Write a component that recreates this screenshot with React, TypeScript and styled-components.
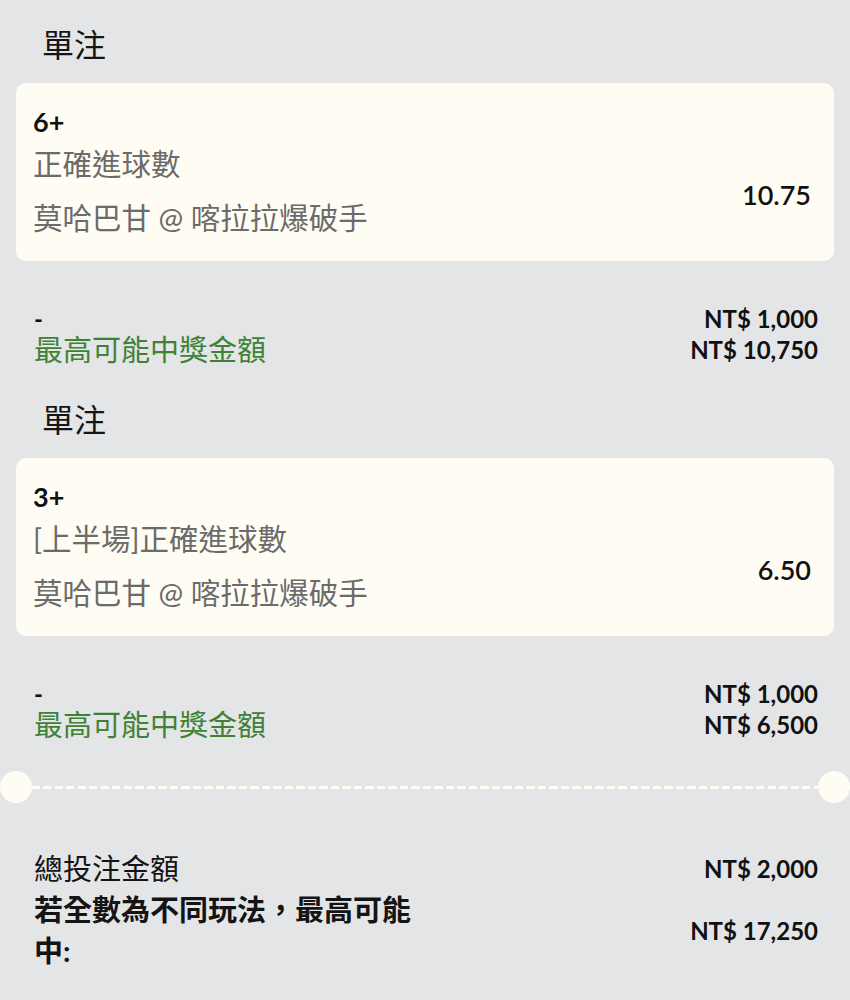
import React from "react";
import styled, { createGlobalStyle } from "styled-components";

const GlobalStyle = createGlobalStyle`
  html, body {
    margin: 0;
    padding: 0;
    background: #e4e5e7;
  }
  body {
    font-family: "Lato", "Noto Sans CJK TC", sans-serif;
    color: #111;
  }
`;

const Page = styled.div`
  width: 850px;
  background: #e4e5e7;
  padding-top: 23px;
  padding-bottom: 30px;
`;

const Section = styled.section`
  padding: 0 16px;
  margin-bottom: 33.5px;
`;

const Title = styled.h2`
  margin: 0 0 16px;
  padding-left: 26px;
  font-size: 32px;
  line-height: 44px;
  font-weight: 400;
  color: #151515;
`;

const Card = styled.div`
  background: #fffdf3;
  border-radius: 10px;
  padding: 21px 23px 19px 17px;
  display: grid;
  grid-template-columns: 1fr auto;
  grid-template-rows: 36px 48px 54px;
`;

const Selection = styled.div`
  grid-column: 1 / 2;
  grid-row: 1;
  font-size: 27px;
  line-height: 36px;
  font-weight: 700;
  color: #111;
`;

const Market = styled.div<{ $row: number; $gap?: number }>`
  grid-column: 1 / 2;
  grid-row: ${(p) => p.$row};
  margin-top: ${(p) => p.$gap ?? 0}px;
  font-size: 29.5px;
  line-height: 48px;
  color: #6b6b6b;
`;

const Odds = styled.div`
  grid-column: 2;
  grid-row: 2 / 4;
  align-self: center;
  padding-top: 6px;
  font-size: 27px;
  font-weight: 600;
  color: #111;
`;

const Summary = styled.div`
  margin-top: 41.5px;
  padding: 0 16px 0 18px;
  display: grid;
  grid-template-columns: 1fr auto;
  grid-auto-rows: 31px;
  align-items: center;
`;

const Dash = styled.div`
  font-size: 24px;
  font-weight: 700;
  line-height: 31px;
  color: #111;
`;

const GreenLabel = styled.div`
  font-size: 29px;
  line-height: 31px;
  color: #3f8236;
`;

const Amount = styled.div`
  text-align: right;
  font-size: 24px;
  font-weight: 700;
  line-height: 31px;
  color: #111;
  white-space: nowrap;
`;

const Separator = styled.div`
  display: flex;
  align-items: center;
  height: 32px;
  margin-top: -2px;
`;

const Hole = styled.span`
  flex: none;
  width: 32px;
  height: 32px;
  border-radius: 50%;
  background: #fffdf3;
`;

const DashedLine = styled.span`
  flex: 1;
  height: 3px;
  background: repeating-linear-gradient(
    to right,
    #fffdf3 0,
    #fffdf3 8px,
    transparent 8px,
    transparent 11.5px
  );
`;

const Totals = styled.div`
  margin-top: 50px;
  padding: 0 32px 0 34px;
  display: grid;
  grid-template-columns: 1fr auto;
  row-gap: 5px;
  align-items: center;
`;

const TotalLabel = styled.div<{ $bold?: boolean }>`
  font-size: 29px;
  line-height: ${(p) => (p.$bold ? "41px" : "30px")};
  font-weight: ${(p) => (p.$bold ? 700 : 400)};
  color: #141414;
  max-width: 392px;
`;

const bets = [
  {
    selection: "6+",
    market: "正確進球數",
    teams: "莫哈巴甘 @ 喀拉拉爆破手",
    odds: "10.75",
    stake: "NT$ 1,000",
    win: "NT$ 10,750",
  },
  {
    selection: "3+",
    market: "[上半場]正確進球數",
    teams: "莫哈巴甘 @ 喀拉拉爆破手",
    odds: "6.50",
    stake: "NT$ 1,000",
    win: "NT$ 6,500",
  },
];

export default function App() {
  return (
    <>
      <GlobalStyle />
      <Page>
        {bets.map((b, i) => (
          <Section key={i}>
            <Title>單注</Title>
            <Card>
              <Selection>{b.selection}</Selection>
              <Market $row={2}>{b.market}</Market>
              <Market $row={3} $gap={6}>
                {b.teams}
              </Market>
              <Odds>{b.odds}</Odds>
            </Card>
            <Summary>
              <Dash>-</Dash>
              <Amount>{b.stake}</Amount>
              <GreenLabel>最高可能中獎金額</GreenLabel>
              <Amount>{b.win}</Amount>
            </Summary>
          </Section>
        ))}
        <Separator>
          <Hole />
          <DashedLine />
          <Hole />
        </Separator>
        <Totals>
          <TotalLabel>總投注金額</TotalLabel>
          <Amount>NT$ 2,000</Amount>
          <TotalLabel $bold>若全數為不同玩法，最高可能中:</TotalLabel>
          <Amount>NT$ 17,250</Amount>
        </Totals>
      </Page>
    </>
  );
}
